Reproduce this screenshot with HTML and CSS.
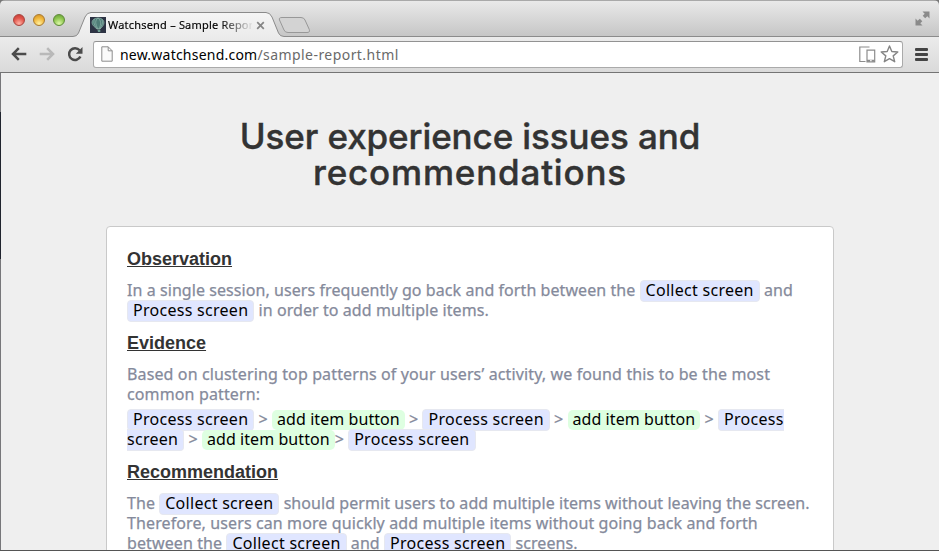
FILE: index.html
```html
<!DOCTYPE html>
<html lang="en">
<head>
<meta charset="utf-8">
<title>Watchsend – Sample Report</title>
<link rel="stylesheet" href="styles.css">
</head>
<body>
<div class="window">
  <header class="strip">
    <svg class="strip-art" width="939" height="37" viewBox="0 0 939 37" aria-hidden="true">
      <defs>
        <linearGradient id="tabfill" x1="0" y1="0" x2="0" y2="1"><stop offset="0" stop-color="#f5f5f5"/><stop offset="1" stop-color="#ebebeb"/></linearGradient>
      </defs>
      <path d="M0 36.5H73Q77 36.5 78.5 33L85 17Q87 12.5 91 12.500H266Q270 12.500 272 17L278.500 33Q280 36.500 284 36.500H939V38H0Z" fill="url(#tabfill)" stroke="#8b8b8b"/>
      <path d="M282 17.500H301Q304 17.500 305 20L309.300 29.500Q310.300 32.500 307 32.500H288Q285 32.500 284 30L279.500 20Q278.500 17.500 282 17.500Z" fill="#d3d3d3" stroke="#989898"/>
    </svg>
    <div class="lights"><i class="light red"></i><i class="light yellow"></i><i class="light green"></i></div>
    <div class="tab">
      <svg width="16" height="16" viewBox="0 0 16 16"><rect width="16" height="16" fill="#2d3344"/><path d="M8 1C4.500 1 2 3 2 5.800c0 2.500 3 4.500 5 6.200l3 0c1.600-1.500 4-3.700 4-6.200C14 3 11.500 1 8 1Z" fill="#4f7d78"/><path d="M8 1C5 3 5 7 8 12M8 1c3 2 3.500 6 1 11M4.500 2C3 5.500 4.500 8.500 7.300 12M12 2.500c1.200 3 0 6-2.300 9.500M8 1C4.500 1 2 3 2 5.800c0 2.500 3 4.500 5 6.200h3c1.600-1.500 4-3.700 4-6.200C14 3 11.500 1 8 1Z" fill="none" stroke="#8fb5aa" stroke-width=".7"/><path d="M7.500 12.800h2.800v2.200h-2.300z" fill="#6d9d91"/></svg>
      <span class="tab-title">Watchsend – Sample Report</span>
      <svg class="close" width="9" height="9" viewBox="0 0 9 9"><path d="M1.200 1.200 7.800 7.800M7.800 1.200 1.200 7.800" stroke="#858585" stroke-width="1.700"/></svg>
    </div>
    <svg class="full" width="15" height="15" viewBox="0 0 15 15" fill="#8a8a8a"><path d="M7.500.500H14.500V7.500L12.300 5.300 10.200 7.300 7.700 4.800 9.700 2.800ZM.500 7.500 2.700 9.700 4.800 7.700 7.300 10.200 5.300 12.300 7.500 14.500H.500Z"/></svg>
  </header>
  <nav class="toolbar">
    <svg class="nav-ic" width="16" height="14" viewBox="0 0 16 14" fill="none" stroke="#4b4b4b" stroke-width="2.500"><path d="M15.300 7H2.500M7.800 1.200 2 7l5.800 5.800"/></svg>
    <svg class="nav-ic fwd" width="16" height="14" viewBox="0 0 16 14" fill="none" stroke="#b9b9b9" stroke-width="2.500"><path d="M.700 7h12.800M8.200 1.200 14 7l-5.800 5.800"/></svg>
    <svg class="nav-ic reload" width="16" height="16" viewBox="0 0 16 16"><path d="M12.600 4.300A5.900 5.900 0 1 0 13.400 10.500" fill="none" stroke="#4b4b4b" stroke-width="2.500"/><path d="M15.500 1v6.700H8.800Z" fill="#4b4b4b"/></svg>
    <div class="omnibox">
      <svg class="page-ic" width="12" height="16" viewBox="0 0 12 16" fill="#fafafa" stroke="#8d8d8d"><path d="M.800.800H7.200L11.200 4.800V15.200H.800ZM7.200.800V4.800H11.200"/></svg>
      <span class="url"><span class="host">new.watchsend.com</span><span class="path">/sample-report.html</span></span>
      <svg width="17" height="17" viewBox="0 0 17 17" fill="none" stroke="#8c8c8c" stroke-width="1.200"><path d="M10.500 1H.800V15.500H6.500"/><path d="M8 4.100H15.700V15.800H8Z" fill="#fff"/><path d="M8 14.800h7.700" stroke-width="2"/><path d="M11.200 14.700h1.400" stroke="#fff"/></svg>
      <svg class="star" width="19" height="18" viewBox="0 0 19 18" fill="#fff" stroke="#858585" stroke-width="1.400" stroke-linejoin="round"><path d="m9.500 1 2.300 5.500 6 .500-4.600 3.900 1.500 5.800-5.200-3.100-5.200 3.100 1.500-5.800L1.200 7l6-.500Z"/></svg>
    </div>
    <div class="menu"><i></i><i></i><i></i></div>
  </nav>
  <main class="page">
    <h1><span class="t1">User experience issues and</span><br><span class="t2">recommendations</span></h1>
    <section class="card">
      <h2>Observation</h2>
      <p class="observation">In a single session, users frequently go back and forth between the <span class="pill">Collect screen</span> and <span class="pill">Process screen</span> in order to add multiple items.</p>
      <h2>Evidence</h2>
      <p class="lead">Based on clustering top patterns of your users’ activity, we found this to be the most common pattern:</p>
      <p class="flow"><span class="pill">Process screen</span> &gt; <span class="action">add item button</span> &gt; <span class="pill">Process screen</span> &gt; <span class="action">add item button</span> &gt; <span class="pill head">Process</span> <span class="pill tail">screen</span> &gt; <span class="action">add item button</span>&gt; <span class="pill">Process screen</span></p>
      <h2>Recommendation</h2>
      <p class="advice">The <span class="pill">Collect screen</span> should permit users to add multiple items without leaving the screen. <span class="wide">Therefore, users can more quickly add multiple items without going back and forth between the</span> <span class="pill">Collect screen</span> and <span class="pill">Process screen</span> screens.</p>
    </section>
  </main>
</div>
</body>
</html>
```
FILE: styles.css
```css
* { box-sizing: border-box; }
body { margin: 0; background: #777; overflow: hidden; }
.window {
  width: 939px; height: 551px; overflow: hidden;
  display: flex; flex-direction: column;
  border-bottom: 1px solid #555;
  border-radius: 5px 5px 0 0;
  font-family: "Noto Sans", sans-serif;
}
.strip {
  position: relative; flex: 0 0 37px;
  display: flex; align-items: center;
  background: linear-gradient(#e9e9e9, #c5c5c5);
  border-top: 1px solid #a9a9a9;
}
.strip-art { position: absolute; left: 0; top: -1px; }
.lights { position: relative; display: flex; gap: 8px; margin-left: 13px; padding-top: 2px; }
.light { width: 12px; height: 12px; border-radius: 50%; border: 1px solid; }
.red { background: radial-gradient(circle at 50% 85%, #ffb3a6, #e2564c 55%, #c03a33); border-color: #a8443e; }
.yellow { background: radial-gradient(circle at 50% 85%, #fff0a0, #f0b73c 55%, #cf8f25); border-color: #a9792e; }
.green { background: radial-gradient(circle at 50% 85%, #dcf8a8, #8fc750 55%, #649c36); border-color: #5d8a38; }
.tab { position: relative; display: flex; align-items: center; margin-left: 25px; padding-top: 12px; width: 176px; }
.tab-title {
  width: 144px; margin-left: 2px; overflow: hidden; white-space: nowrap;
  font-size: 11px; line-height: 16px; letter-spacing: .2px; color: #000; -webkit-text-stroke: .15px #000;
  -webkit-mask-image: linear-gradient(90deg, #000 112px, transparent 146px);
  mask-image: linear-gradient(90deg, #000 112px, transparent 146px);
}
.close { margin-left: 4px; flex: none; }
.full { position: relative; margin: 0 9px 2px auto; }
.toolbar {
  flex: 0 0 36px; display: flex; align-items: center;
  padding: 0 11px 1px 11px;
  background: linear-gradient(#ebebeb, #dadada);
  border-bottom: 1px solid #747474;
}
.fwd { margin-left: 12px; }
.reload { margin-left: 12px; }
.omnibox {
  display: flex; align-items: center; margin-left: 10px; width: 810px; height: 27px;
  padding: 0 3px 0 7px; background: #fff; border: 1px solid #aaa; border-top-color: #929292; border-radius: 3px;
}
.url { flex: 1; margin-left: 7px; padding-top: 1px; font-size: 14px; line-height: 20px; color: #6a6a6a; }
.host { color: #000; letter-spacing: .22px; }
.path { letter-spacing: .44px; }
.star { margin-left: 4px; }
.menu { display: grid; gap: 2px; margin-left: 12px; }
.menu i { width: 13px; height: 3px; border-radius: 1px; background: #444; }
.page {
  flex: 1; min-height: 0; overflow: hidden; padding: 45px 105px 0 106px;
  background: linear-gradient(#77777a 39px, #20242e 39px 186px, #77777a 186px) 0 0 / 1px 100% no-repeat #efefef;
}
h1 {
  margin: 0; text-align: center; color: #333;
  font: 500 35px/36px Inter, sans-serif; -webkit-text-stroke: .4px #333;
}
.t1 { letter-spacing: -.1px; }
.t2 { letter-spacing: .8px; }
.card {
  margin-top: 36px; width: 728px; height: 400px; padding: 22px 20px 0;
  background: #fff; border: 1px solid #c9c9c9; border-radius: 4px;
}
h2 {
  margin: 0 0 11px; color: #333; text-decoration: underline;
  font: bold 18px/20px "Liberation Sans", sans-serif;
}
p { margin: 0 0 13px; font-size: 16px; line-height: 20px; color: #858a9b; -webkit-text-stroke: .25px #858a9b; }
.observation { letter-spacing: .07px; }
.lead { margin-bottom: 5px; letter-spacing: .13px; }
.flow { letter-spacing: .07px; }
.advice { letter-spacing: .06px; }
.wide { letter-spacing: .11px; }
.pill, .action { display: inline-block; line-height: 18px; color: #000; white-space: nowrap; -webkit-text-stroke: 0; }
.pill {
  padding: 0 5px 2px; margin-bottom: -2px; letter-spacing: .28px;
  background: #e0e6ff; border: 1px solid #e6e8f0; border-radius: 4px;
}
.action { padding: 0 5px 2px; margin-bottom: -2px; background: #deffe1; border-radius: 5px; }
.head { padding-right: 0; border-right: 0; border-radius: 4px 0 0 4px; }
.tail { padding-left: 0; border-left: 0; border-radius: 0 4px 4px 0; }
```
